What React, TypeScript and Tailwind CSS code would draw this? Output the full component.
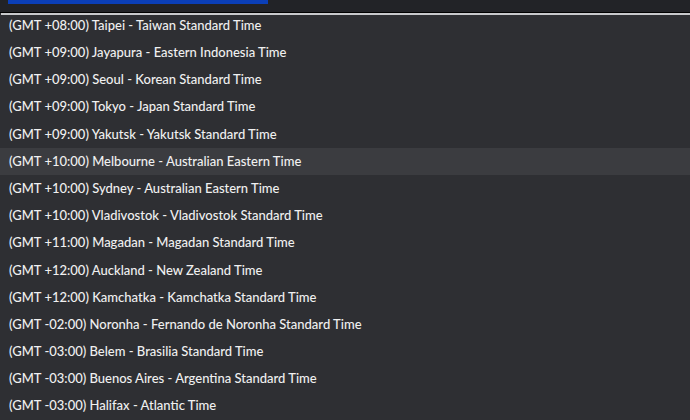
import React from "react";

const items = [
  "(GMT +08:00) Taipei - Taiwan Standard Time",
  "(GMT +09:00) Jayapura - Eastern Indonesia Time",
  "(GMT +09:00) Seoul - Korean Standard Time",
  "(GMT +09:00) Tokyo - Japan Standard Time",
  "(GMT +09:00) Yakutsk - Yakutsk Standard Time",
  "(GMT +10:00) Melbourne - Australian Eastern Time",
  "(GMT +10:00) Sydney - Australian Eastern Time",
  "(GMT +10:00) Vladivostok - Vladivostok Standard Time",
  "(GMT +11:00) Magadan - Magadan Standard Time",
  "(GMT +12:00) Auckland - New Zealand Time",
  "(GMT +12:00) Kamchatka - Kamchatka Standard Time",
  "(GMT -02:00) Noronha - Fernando de Noronha Standard Time",
  "(GMT -03:00) Belem - Brasilia Standard Time",
  "(GMT -03:00) Buenos Aires - Argentina Standard Time",
  "(GMT -03:00) Halifax - Atlantic Time",
];

export default function App() {
  return (
    <div
      className="w-[690px] h-[420px] overflow-hidden bg-[#2e2f33] flex flex-col"
      style={{ fontFamily: 'Lato, "Noto Sans", sans-serif' }}
    >
      <div className="h-[13px] shrink-0 bg-[#222327] border-b border-black px-[8px]">
        <div className="w-[260px] h-[4px] bg-[#0b3fb8]" />
      </div>
      <div className="h-[2px] shrink-0 bg-[#c8c9cc] ml-[1px]" />
      <div className="flex-1 overflow-hidden">
        <div className="-mt-[3px]">
          {items.map((t, i) => (
            <div
              key={i}
              className={`h-[27.2px] flex items-center px-[9px] text-[13px] font-medium text-[#f0f0f0] ${
                i === 5 ? "bg-[#3b3c40]" : ""
              }`}
            >
              {t}
            </div>
          ))}
        </div>
      </div>
    </div>
  );
}
